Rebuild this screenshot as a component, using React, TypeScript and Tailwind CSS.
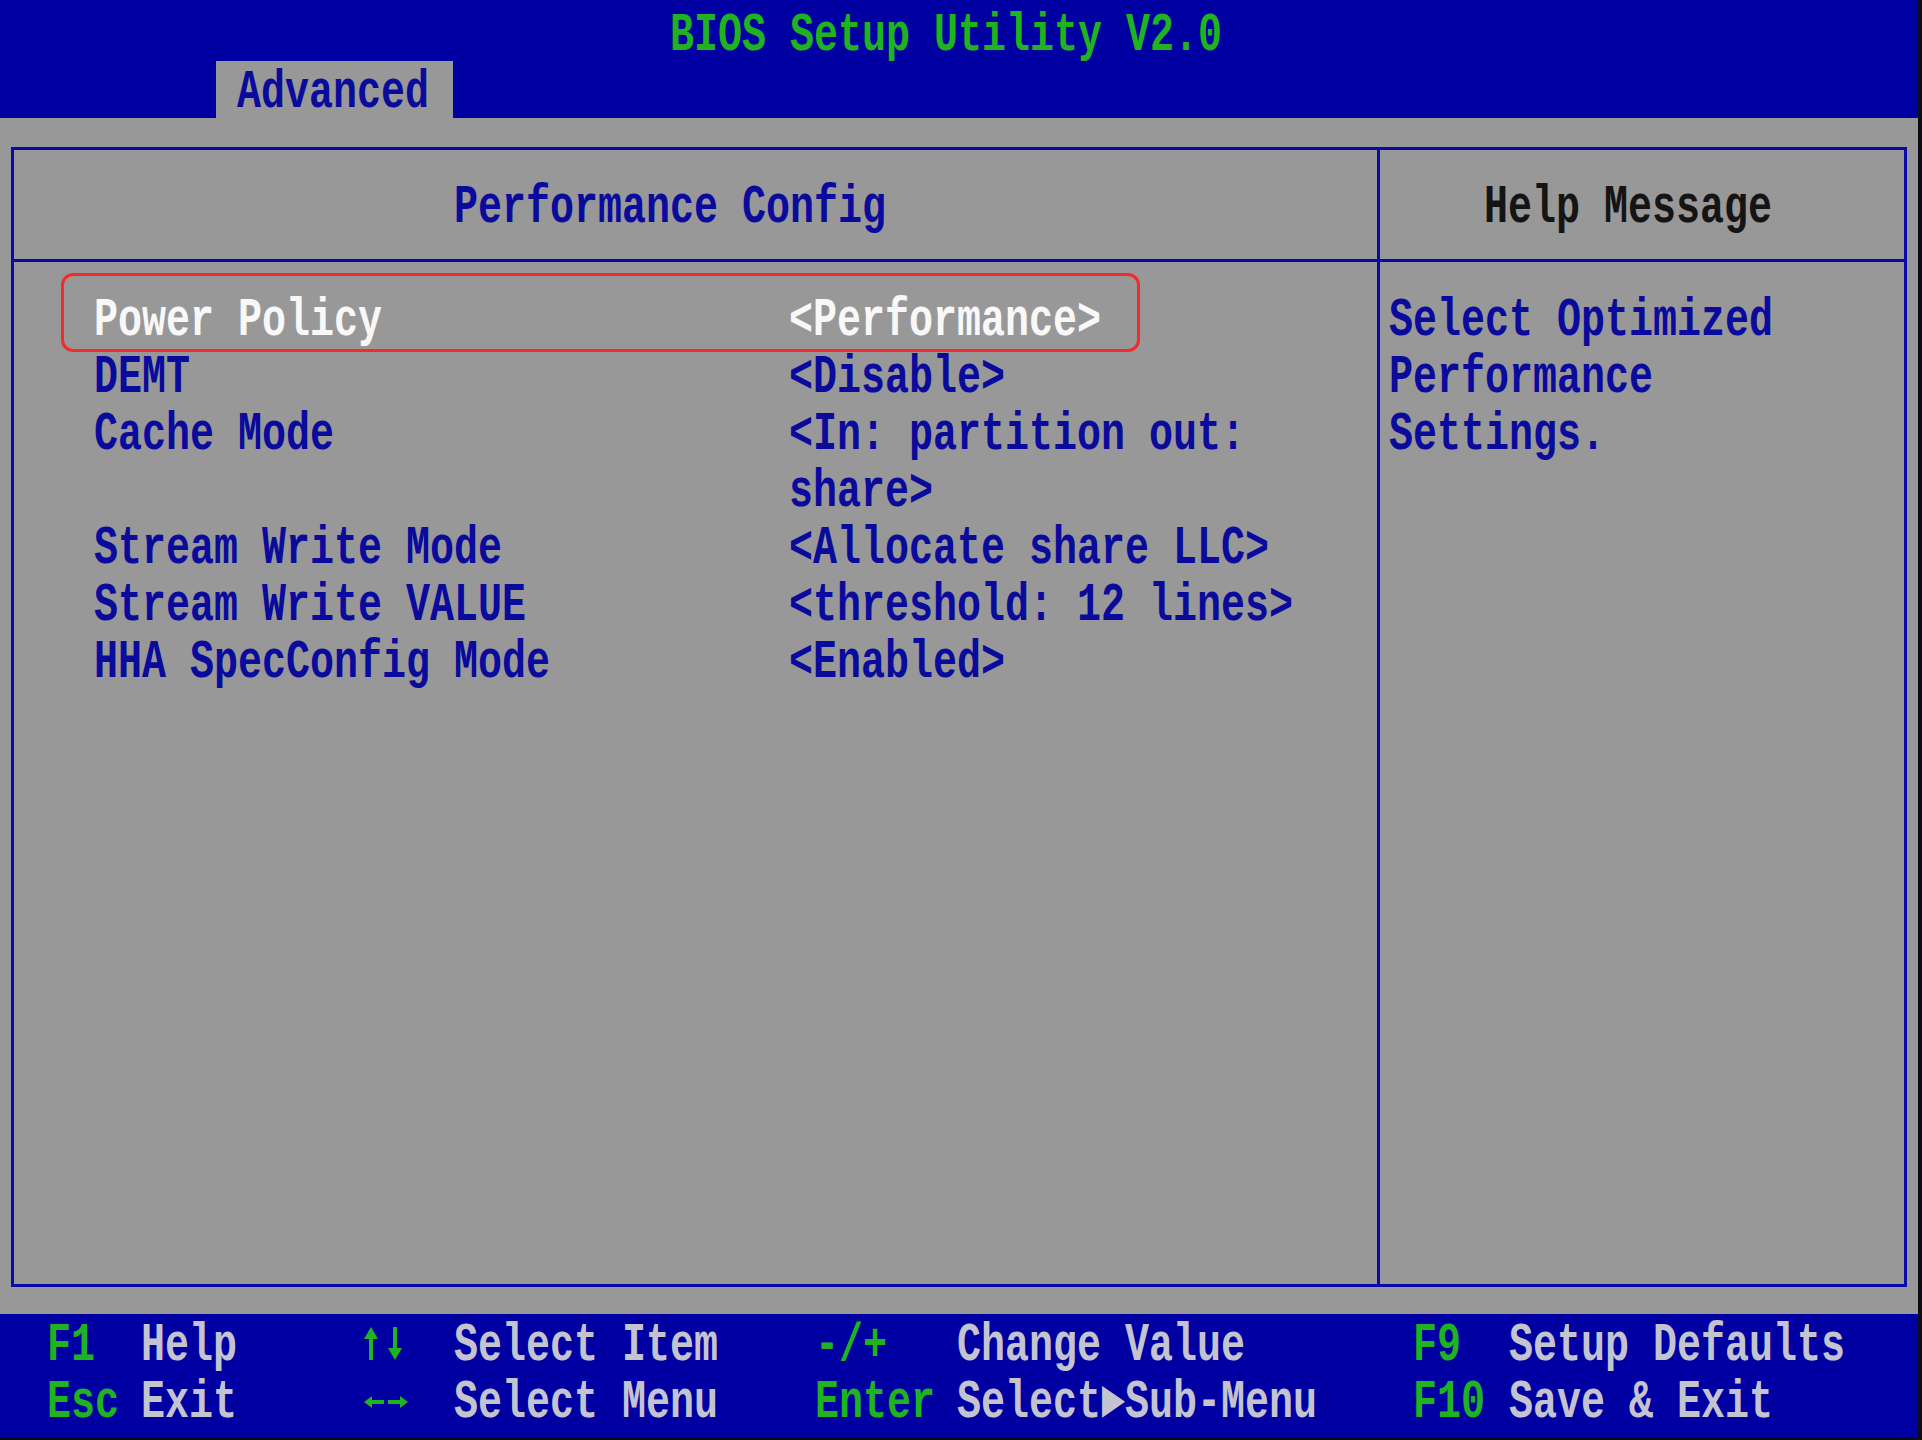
import type React from "react"

// one character cell is 24px wide, one text row 57px tall
const T: React.FC<{ children: React.ReactNode; className?: string }> = ({ children, className = "" }) => (
  <span className={`inline-block whitespace-pre origin-center scale-y-[1.33] translate-y-[4px] ${className}`}>
    {children}
  </span>
)

const UpDown = () => (
  <svg width="48" height="57" viewBox="0 0 48 57" className="block fill-[#1fb41f]">
    <polygon points="9,13 2,25 16,25" />
    <rect x="7" y="24" width="4" height="22" />
    <rect x="31" y="13" width="4" height="22" />
    <polygon points="26,34 40,34 33,46" />
  </svg>
)

const LeftRight = () => (
  <svg width="48" height="57" viewBox="0 0 48 57" className="block fill-[#1fb41f]">
    <polygon points="2,31 10,25 10,37" />
    <rect x="9" y="29" width="13" height="4" />
    <rect x="26" y="29" width="13" height="4" />
    <polygon points="38,25 38,37 46,31" />
  </svg>
)

const rows: { label: string; value: string[]; active?: boolean }[] = [
  { label: "Power Policy", value: ["<Performance>"], active: true },
  { label: "DEMT", value: ["<Disable>"] },
  { label: "Cache Mode", value: ["<In: partition out:", "share>"] },
  { label: "Stream Write Mode", value: ["<Allocate share LLC>"] },
  { label: "Stream Write VALUE", value: ["<threshold: 12 lines>"] },
  { label: "HHA SpecConfig Mode", value: ["<Enabled>"] },
]

const helpLines = ["Select Optimized", "Performance", "Settings."]

const keys: [string, string, React.ReactNode, string, string, string, string, string][] = [
  ["F1", "Help", <UpDown />, "Select Item", "-/+", "Change Value", "F9", "Setup Defaults"],
  ["Esc", "Exit", <LeftRight />, "Select Menu", "Enter", "Select►Sub-Menu", "F10", "Save & Exit"],
]

export default function App() {
  return (
    <div className="w-[1922px] h-[1440px] flex flex-col overflow-hidden border-r-[4px] border-b-[3px] border-[#0c0c14] bg-[#989898] font-['Liberation_Mono','DejaVu_Sans_Mono',monospace] font-bold text-[40px] leading-[57px]">
      {/* title bar */}
      <header className="h-[118px] shrink-0 flex flex-col bg-[#0000a2]">
        <div className="h-[61px] pt-[4px] pl-[670px] flex items-center">
          <T className="text-[#1fb41f]">BIOS Setup Utility V2.0</T>
        </div>
        <div className="h-[57px] pl-[216px] flex">
          <div className="w-[237px] pl-[21px] flex items-center bg-[#989898]">
            <T className="text-[#0a0a9c]">Advanced</T>
          </div>
        </div>
      </header>

      {/* main panel */}
      <main className="flex-1 pt-[29px] pl-[11px] pr-[11px] pb-[27px]">
        <div className="h-full grid grid-cols-[1366px_1fr] border-[3px] border-[#0a0aa8]">
          <section className="flex flex-col border-r-[3px] border-[#0a0aa8]">
            <div className="h-[112px] shrink-0 pl-[440px] flex items-center border-b-[3px] border-[#0a0aa8]">
              <T className="text-[#0a0a9c]">Performance Config</T>
            </div>
            <div className="relative pt-[27px] pl-[80px]">
              <div className="absolute left-[47px] top-[11px] w-[1079px] h-[79px] rounded-[12px] border-[3px] border-[#f52a2a]" />
              {rows.map((row) => (
                <div key={row.label} className="grid grid-cols-[695px_1fr]">
                  <div>
                    <T className={row.active ? "text-[#f8f8f8]" : "text-[#0a0a9c]"}>{row.label}</T>
                  </div>
                  <div className="flex flex-col">
                    {row.value.map((line) => (
                      <div key={line}>
                        <T className={row.active ? "text-[#f8f8f8]" : "text-[#0a0a9c]"}>{line}</T>
                      </div>
                    ))}
                  </div>
                </div>
              ))}
            </div>
          </section>

          <section className="flex flex-col">
            <div className="h-[112px] shrink-0 pl-[104px] flex items-center border-b-[3px] border-[#0a0aa8]">
              <T className="text-[#141414]">Help Message</T>
            </div>
            <div className="pt-[27px] pl-[9px] flex flex-col">
              {helpLines.map((line) => (
                <div key={line}>
                  <T className="text-[#0a0a9c]">{line}</T>
                </div>
              ))}
            </div>
          </section>
        </div>
      </main>

      {/* key legend */}
      <footer className="h-[123px] shrink-0 pl-[47px] bg-[#0000a2]">
        {keys.map((k, r) => (
          <div key={r} className="grid grid-cols-[94px_221px_92px_361px_142px_456px_96px_1fr]">
            {k.map((cell, i) => (
              <div key={i}>
                {typeof cell === "string" ? (
                  <T className={i % 2 === 0 ? "text-[#1fb41f]" : "text-[#c4c4d0]"}>{cell}</T>
                ) : (
                  cell
                )}
              </div>
            ))}
          </div>
        ))}
      </footer>
    </div>
  )
}
